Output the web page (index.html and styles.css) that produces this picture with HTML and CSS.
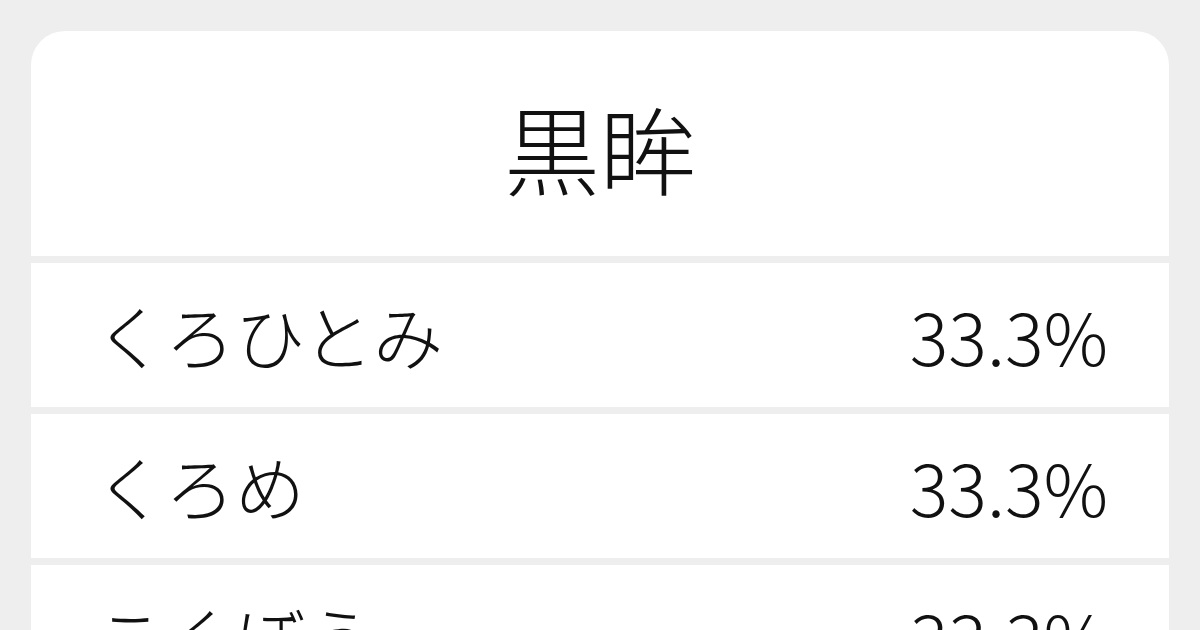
FILE: index.html
```html
<!DOCTYPE html>
<html lang="ja">
<head>
<meta charset="utf-8">
<link rel="stylesheet" href="styles.css">
</head>
<body>
<div class="card">
  <div class="head"><h1 class="title">黒眸</h1></div>
  <div class="row"><span class="reading">くろひとみ</span><span class="pct">33.3%</span></div>
  <div class="row"><span class="reading">くろめ</span><span class="pct">33.3%</span></div>
  <div class="row"><span class="reading">こくぼう</span><span class="pct">33.3%</span></div>
</div>
</body>
</html>
```
FILE: styles.css
```css
html, body {
  margin: 0;
  padding: 0;
  background: #eeeeee;
  height: 630px;
  overflow: hidden;
}
body {
  font-family: "Noto Sans CJK JP", "Noto Sans", sans-serif;
  color: #111111;
}
.card {
  margin: 31px 31px 0 31px;
  border-radius: 34px 34px 0 0;
  overflow: hidden;
  display: flex;
  flex-direction: column;
  gap: 6.5px;
}
.head {
  background: #ffffff;
  height: 225px;
  display: flex;
  align-items: center;
  justify-content: center;
}
.title {
  margin: 0;
  font-size: 96px;
  font-weight: 300;
  line-height: 1;
  padding-top: 6px;
}
.row {
  background: #ffffff;
  height: 144.5px;
  flex-shrink: 0;
  display: flex;
  align-items: center;
  justify-content: space-between;
  padding: 0 61px 0 64px;
  font-size: 70px;
  font-weight: 300;
  line-height: 1;
}
.pct {
  font-size: 72px;
}
```
